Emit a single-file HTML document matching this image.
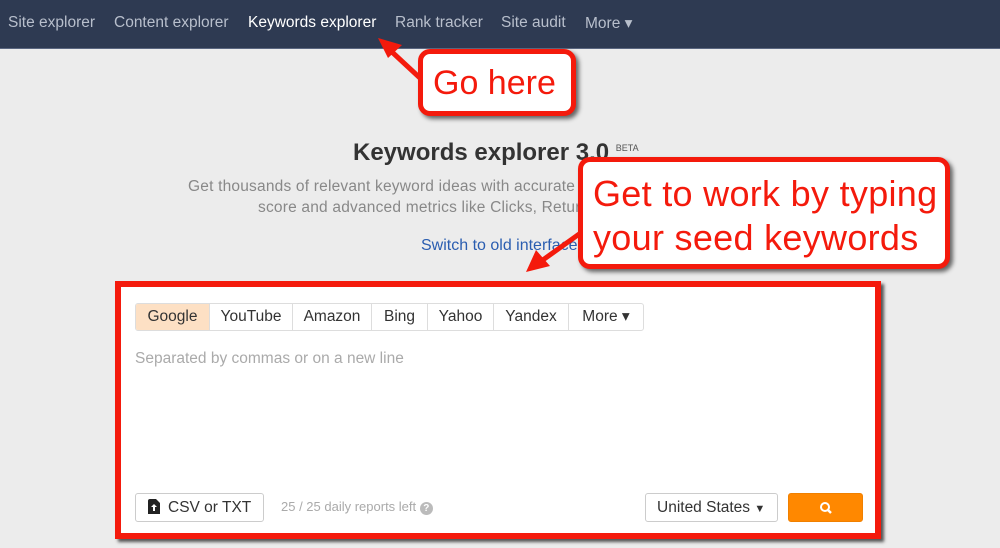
<!DOCTYPE html>
<html><head><style>
body{margin:0;width:1000px;height:548px;background:#ececec;font-family:"Liberation Sans",sans-serif;position:relative;overflow:hidden}
.nav{position:absolute;left:0;top:0;width:1000px;height:48px;background:#2e3a52;border-bottom:1px solid #5a6680}
.nav span{position:absolute;top:14px;font-size:15.5px;color:#b8bfcc}
.abs{position:absolute}
.box{position:absolute;left:115px;top:281px;width:754px;height:246px;background:#fff;border:6px solid #f41a0c;box-shadow:3px 3px 3px #555}
.tabs{position:absolute;left:135px;top:303px;height:26px;display:flex;border:1px solid #ddd;border-radius:3px;overflow:hidden}
.tabs div{height:26px;line-height:26px;text-align:center;font-size:15.5px;color:#333;border-right:1px solid #ddd;box-sizing:border-box}
.call{position:absolute;background:#fff;border:5px solid #f41a0c;border-radius:12px;color:#f41a0c;font-size:34px;box-shadow:3px 3px 4px #666;box-sizing:border-box}
.btn{position:absolute;top:493px;height:29px;border:1px solid #ccc;border-radius:3px;background:#fff;box-sizing:border-box;font-size:15.5px;color:#333;line-height:27px}
</style></head><body>
<div class="nav">
<span style="left:8px">Site explorer</span>
<span style="left:114px">Content explorer</span>
<span style="left:248px;color:#fff">Keywords explorer</span>
<span style="left:395px">Rank tracker</span>
<span style="left:501px">Site audit</span>
<span style="left:585px">More ▾</span>
</div>
<div class="abs" style="left:353px;top:139px;font-size:24px;font-weight:bold;color:#333">Keywords explorer 3.0 <sup style="font-size:9px;font-weight:normal;color:#555">BETA</sup></div>
<div class="abs" style="left:188px;top:178px;font-size:15.5px;color:#888;width:420px;letter-spacing:0.2px">Get thousands of relevant keyword ideas with accurate S</div>
<div class="abs" style="left:258px;top:199px;font-size:15.5px;color:#888;letter-spacing:0.2px">score and advanced metrics like Clicks, Retur</div>
<div class="abs" style="left:421px;top:237px;font-size:16px;color:#2a5db0">Switch to old interface</div>

<div class="box"></div>
<div class="tabs">
<div style="width:74px;background:#fde0c4">Google</div>
<div style="width:83px">YouTube</div>
<div style="width:79px">Amazon</div>
<div style="width:56px">Bing</div>
<div style="width:66px">Yahoo</div>
<div style="width:75px">Yandex</div>
<div style="width:74px;border:none">More ▾</div>
</div>
<div class="abs" style="left:135px;top:350px;font-size:15.5px;color:#aaa">Separated by commas or on a new line</div>
<div class="btn" style="left:135px;width:129px;padding-left:12px">
<svg width="12" height="15" viewBox="0 0 12 15" style="vertical-align:-2px;margin-right:8px"><path d="M0 2Q0 0 2 0H8L12 4V15H0Z" fill="#222"/><path d="M6 5L3 8H5V12H7V8H9Z" fill="#fff"/></svg>CSV or TXT</div>
<div class="abs" style="left:281px;top:499px;font-size:13px;color:#aaa">25 / 25 daily reports left <span style="display:inline-block;width:13px;height:13px;border-radius:50%;background:#bbb;color:#fff;font-size:10px;text-align:center;line-height:13px;font-weight:bold">?</span></div>
<div class="btn" style="left:645px;width:133px;padding-left:11px">United States <span style="font-size:11px">▼</span></div>
<div class="btn" style="left:788px;width:75px;background:#ff8800;border-color:#f08000">
<svg width="14" height="14" viewBox="0 0 14 14" style="position:absolute;left:30px;top:7px"><circle cx="6" cy="6" r="4" stroke="#fff" stroke-width="2" fill="none"/><path d="M9 9L12 12" stroke="#fff" stroke-width="2.4"/></svg></div>

<svg class="abs" style="left:0;top:0" width="1000" height="548">
<path d="M420 78L392 52" stroke="#f41a0c" stroke-width="5"/>
<path d="M378 38L402 45L388 58Z" fill="#f41a0c"/>
<path d="M582 232L540 262" stroke="#f41a0c" stroke-width="5"/>
<path d="M526 272L536 250L550 266Z" fill="#f41a0c"/>
</svg>
<div class="call" style="left:418px;top:49px;width:158px;height:67px;line-height:58px;padding-left:10px">Go here</div>
<div class="call" style="left:578px;top:157px;width:372px;height:112px;padding:10px 0 0 10px;line-height:44px;font-size:36px;letter-spacing:0.3px">Get to work by typing<br>your seed keywords</div>
</body></html>
